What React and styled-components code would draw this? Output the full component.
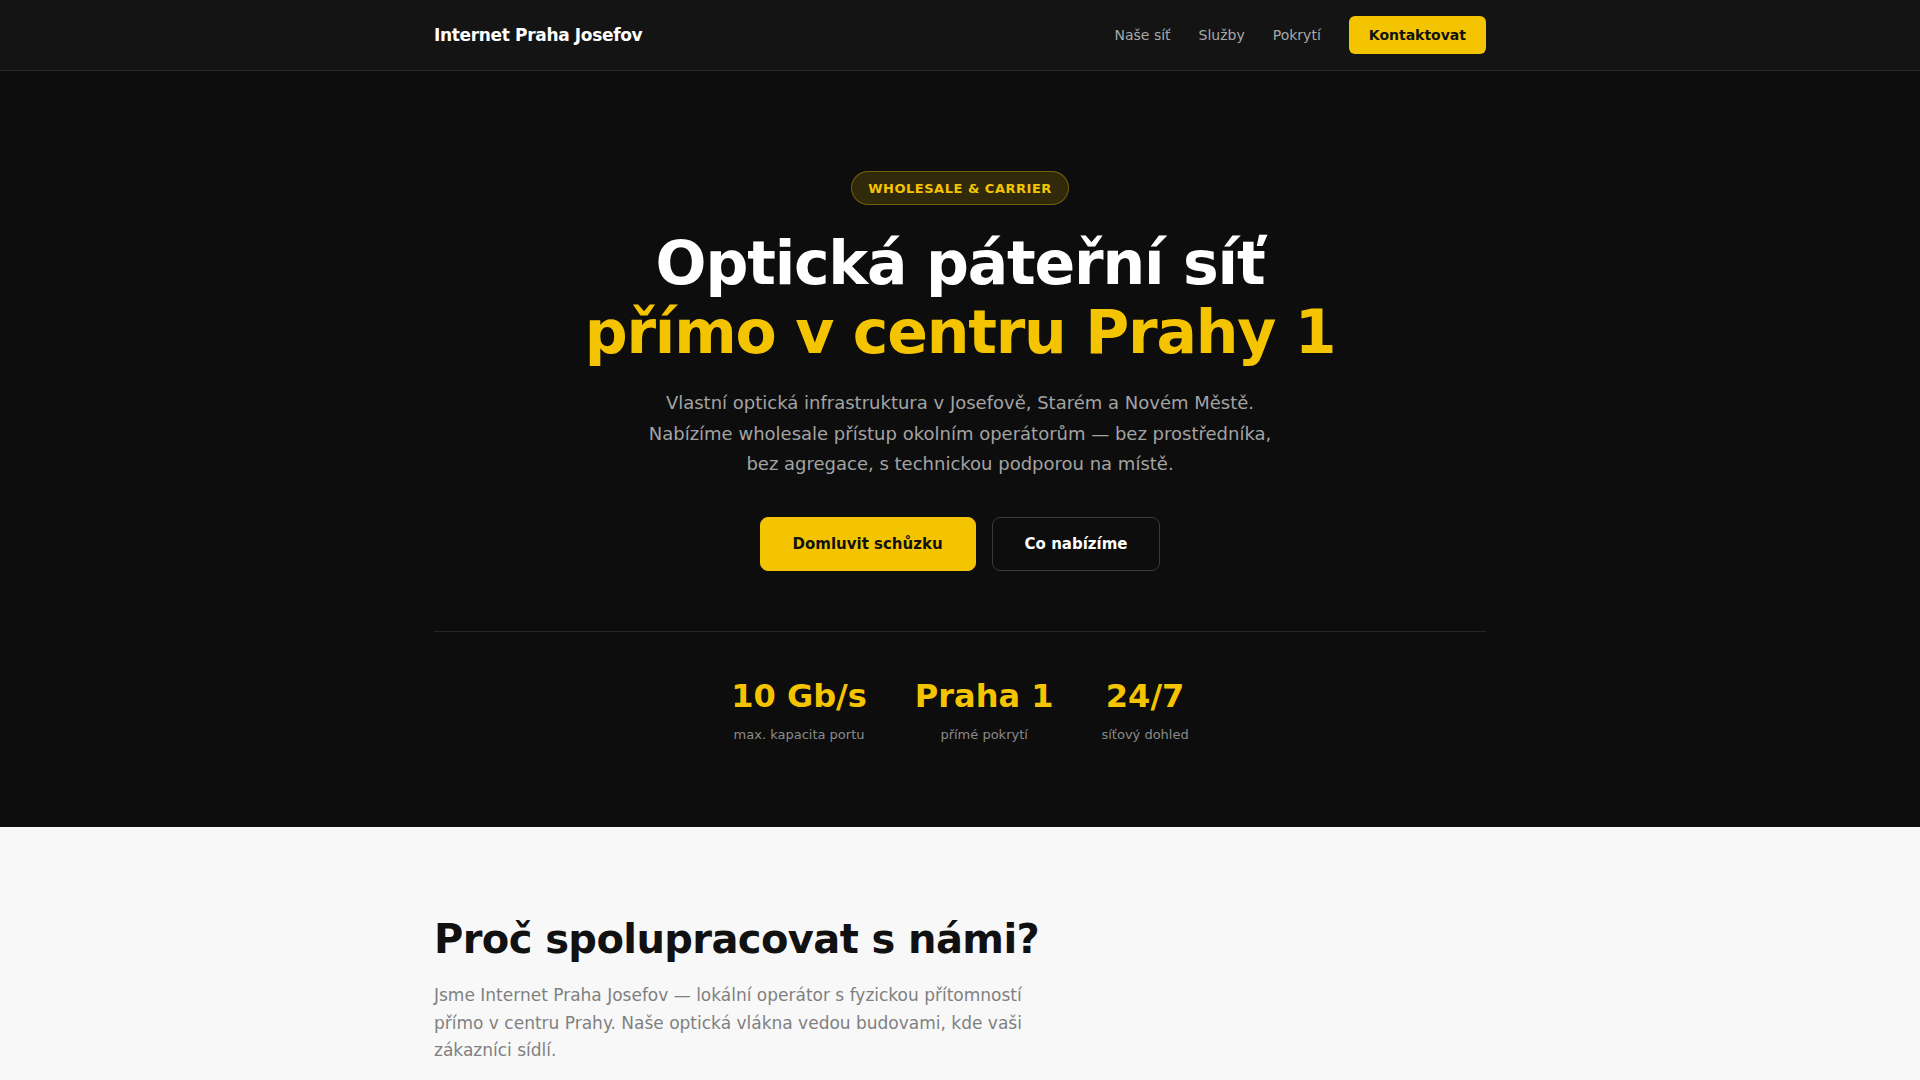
import React from "react";
import styled, { createGlobalStyle } from "styled-components";

const Global = createGlobalStyle`
  * { box-sizing: border-box; }
  html, body { margin: 0; padding: 0; }
  body {
    font-family: "DejaVu Sans", "Noto Sans", sans-serif;
    background: #f8f8f8;
    color: #111;
  }
`;

const Container = styled.div`
  max-width: 1100px;
  margin: 0 auto;
  padding: 0 24px;
`;

const Header = styled.header`
  background: #141414;
  border-bottom: 1px solid #2a2a2a;
`;

const NavBar = styled(Container)`
  height: 70px;
  display: flex;
  align-items: center;
  justify-content: space-between;
`;

const Logo = styled.a`
  color: #fff;
  font-weight: 700;
  font-size: 17px;
  letter-spacing: -0.02em;
  text-decoration: none;
`;

const NavLinks = styled.nav`
  display: flex;
  align-items: center;
  gap: 28px;
`;

const NavLink = styled.a`
  color: #a8a8a8;
  font-size: 14px;
  text-decoration: none;
`;

const NavButton = styled.a`
  background: #f5c400;
  color: #111;
  font-weight: 700;
  font-size: 14px;
  text-decoration: none;
  height: 38px;
  padding: 0 20px;
  border-radius: 6px;
  display: inline-flex;
  align-items: center;
`;

const Hero = styled.section`
  background: #0d0d0d;
  padding: 100px 0 83px;
`;

const HeroInner = styled(Container)`
  display: flex;
  flex-direction: column;
  align-items: center;
  text-align: center;
`;

const Badge = styled.span`
  display: inline-flex;
  align-items: center;
  height: 34px;
  padding: 0 16px;
  border-radius: 999px;
  background: rgba(245, 196, 0, 0.16);
  border: 1px solid rgba(245, 196, 0, 0.35);
  color: #f5c400;
  font-size: 13px;
  font-weight: 700;
  letter-spacing: 0.04em;
`;

const Title = styled.h1`
  margin: 24px 0 0;
  font-size: 60px;
  line-height: 1.15;
  font-weight: 700;
  letter-spacing: -0.02em;
  color: #fff;
`;

const Accent = styled.span`
  color: #f5c400;
  display: block;
`;

const Lead = styled.p`
  margin: 21px 0 0;
  max-width: 640px;
  font-size: 18px;
  line-height: 1.7;
  color: #a3a3a3;
`;

const Actions = styled.div`
  display: flex;
  gap: 16px;
  margin-top: 37px;
`;

const Button = styled.a`
  height: 54px;
  padding: 0 32px;
  border-radius: 8px;
  display: inline-flex;
  align-items: center;
  font-size: 15px;
  font-weight: 700;
  text-decoration: none;
  background: ${(p) => (p.$primary ? "#f5c400" : "transparent")};
  color: ${(p) => (p.$primary ? "#111" : "#fff")};
  border: 1px solid ${(p) => (p.$primary ? "#f5c400" : "#3a3a3a")};
`;

const Stats = styled.div`
  align-self: stretch;
  margin-top: 60px;
  padding-top: 47px;
  border-top: 1px solid #262626;
  display: flex;
  justify-content: center;
  gap: 48px;
`;

const Stat = styled.div`
  display: flex;
  flex-direction: column;
  align-items: center;
`;

const StatValue = styled.div`
  font-size: 32px;
  line-height: 1.1;
  font-weight: 700;
  color: #f5c400;
`;

const StatLabel = styled.div`
  margin-top: 11px;
  font-size: 13px;
  line-height: 1.5;
  color: #8a8a8a;
`;

const Why = styled.section`
  background: #f8f8f8;
  padding: 88px 0 80px;
`;

const H2 = styled.h2`
  margin: 0;
  font-size: 40px;
  line-height: 1.2;
  font-weight: 700;
  letter-spacing: -0.015em;
  color: #111;
`;

const Text = styled.p`
  margin: 19px 0 0;
  max-width: 600px;
  font-size: 17px;
  line-height: 1.6;
  color: #808080;
`;

export default function App() {
  return (
    <>
      <Global />
      <Header>
        <NavBar>
          <Logo href="#">Internet Praha Josefov</Logo>
          <NavLinks>
            <NavLink href="#">Naše síť</NavLink>
            <NavLink href="#">Služby</NavLink>
            <NavLink href="#">Pokrytí</NavLink>
            <NavButton href="#">Kontaktovat</NavButton>
          </NavLinks>
        </NavBar>
      </Header>
      <Hero>
        <HeroInner>
          <Badge>WHOLESALE &amp; CARRIER</Badge>
          <Title>
            Optická páteřní síť
            <Accent>přímo v centru Prahy 1</Accent>
          </Title>
          <Lead>
            Vlastní optická infrastruktura v Josefově, Starém a Novém Městě.
            Nabízíme wholesale přístup okolním operátorům — bez prostředníka,
            bez agregace, s technickou podporou na místě.
          </Lead>
          <Actions>
            <Button $primary href="#">Domluvit schůzku</Button>
            <Button href="#">Co nabízíme</Button>
          </Actions>
          <Stats>
            <Stat>
              <StatValue>10 Gb/s</StatValue>
              <StatLabel>max. kapacita portu</StatLabel>
            </Stat>
            <Stat>
              <StatValue>Praha 1</StatValue>
              <StatLabel>přímé pokrytí</StatLabel>
            </Stat>
            <Stat>
              <StatValue>24/7</StatValue>
              <StatLabel>síťový dohled</StatLabel>
            </Stat>
          </Stats>
        </HeroInner>
      </Hero>
      <Why>
        <Container>
          <H2>Proč spolupracovat s námi?</H2>
          <Text>
            Jsme Internet Praha Josefov — lokální operátor s fyzickou přítomností
            přímo v centru Prahy. Naše optická vlákna vedou budovami, kde vaši
            zákazníci sídlí.
          </Text>
        </Container>
      </Why>
    </>
  );
}
